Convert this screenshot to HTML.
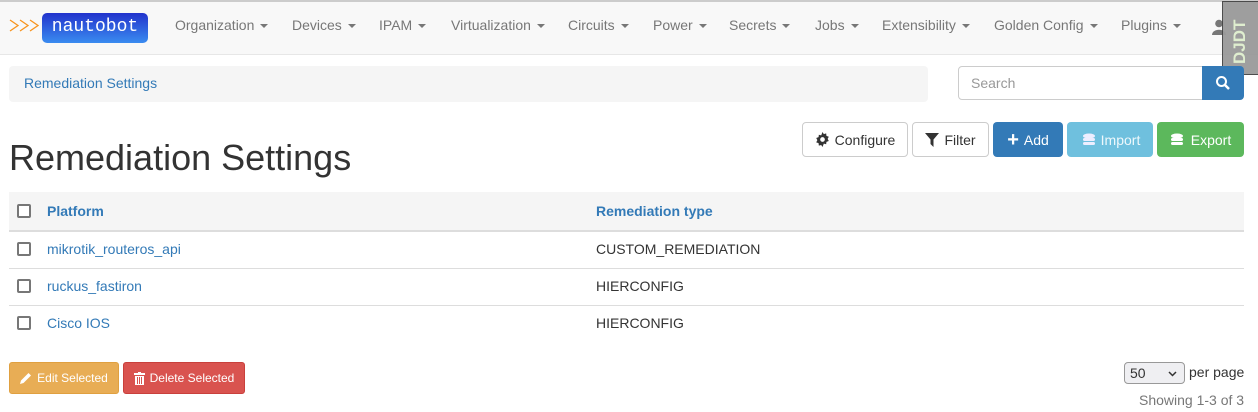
<!DOCTYPE html>
<html><head><meta charset="utf-8"><style>
*{box-sizing:border-box}
body{margin:0;width:1258px;height:412px;overflow:hidden;background:#fff;font-family:"Liberation Sans",sans-serif;font-size:14px;color:#333;position:relative}
.a{position:absolute}
.nav{left:0;top:0;width:1258px;height:55px;background:#f8f8f8;border-top:2px solid #ccc;border-bottom:1px solid #e7e7e7}
.ni{top:17px;font-size:14px;color:#777;white-space:nowrap}
.car{display:inline-block;width:0;height:0;border-left:4px solid transparent;border-right:4px solid transparent;border-top:4px solid #777;vertical-align:middle;margin-left:6px}
.btn{position:absolute;top:122px;height:35px;border-radius:4px;font-size:14px;display:flex;align-items:center;justify-content:center;gap:5px}
.cb{position:absolute;left:17px;width:14px;height:14px;border:2px solid #777;border-radius:2px;background:#fff}
.hr{position:absolute;left:9px;width:1235px;height:1px;background:#ddd}
a{color:#337ab7;text-decoration:none}
</style></head><body>
<div class="a nav"></div>
<svg class="a" style="left:9px;top:19px" width="30" height="13" viewBox="0 0 30 13"><path d="M1 1L9 6.5 1 12M11 1L19 6.5 11 12M21 1L29 6.5 21 12" stroke="#f7931e" stroke-width="1.3" fill="none"/></svg>
<div class="a" style="left:42px;top:13px;width:106px;height:30px;border-radius:5px;background:linear-gradient(#2233cc,#3a8cf0);color:#fff;font-family:'Liberation Mono',monospace;font-size:18px;text-align:center;line-height:29px">nautobot</div>
<div class="a ni" style="left:175px">Organization<span class="car"></span></div>
<div class="a ni" style="left:292px">Devices<span class="car"></span></div>
<div class="a ni" style="left:379px">IPAM<span class="car"></span></div>
<div class="a ni" style="left:451px">Virtualization<span class="car"></span></div>
<div class="a ni" style="left:568px">Circuits<span class="car"></span></div>
<div class="a ni" style="left:653px">Power<span class="car"></span></div>
<div class="a ni" style="left:729px">Secrets<span class="car"></span></div>
<div class="a ni" style="left:815px">Jobs<span class="car"></span></div>
<div class="a ni" style="left:882px">Extensibility<span class="car"></span></div>
<div class="a ni" style="left:994px">Golden Config<span class="car"></span></div>
<div class="a ni" style="left:1121px">Plugins<span class="car"></span></div>
<svg class="a" style="left:1212px;top:19px" width="14" height="16" viewBox="0 0 14 16"><circle cx="7" cy="4.5" r="3.8" fill="#777"/><path d="M0 16 C0 9 14 9 14 16Z" fill="#777"/></svg>
<div class="a" style="left:1222px;top:1px;width:36px;height:74px;background:#9a9a9a;border:1px solid #444;border-right:none;opacity:.95"></div>
<div class="a" style="left:1230px;top:64px;transform:rotate(-90deg);transform-origin:0 0;color:#dfeecf;font-weight:bold;font-size:17px;width:60px;line-height:20px">DJDT</div>

<div class="a" style="left:9px;top:66px;width:919px;height:36px;background:#f5f5f5;border-radius:4px"></div>
<div class="a" style="left:24px;top:75px"><a>Remediation Settings</a></div>
<div class="a" style="left:958px;top:66px;width:246px;height:34px;border:1px solid #ccc;border-radius:4px 0 0 4px;padding:8px 12px;color:#999">Search</div>
<div class="a" style="left:1202px;top:66px;width:42px;height:34px;background:#337ab7;border-radius:0 4px 4px 0"></div>
<svg class="a" style="left:1215px;top:75px" width="16" height="16" viewBox="0 0 16 16"><circle cx="6.5" cy="6.5" r="4.5" stroke="#fff" stroke-width="2" fill="none"/><path d="M10 10 L14 14" stroke="#fff" stroke-width="2.5"/></svg>

<div class="a" style="left:9px;top:137px;font-size:36px;color:#333">Remediation Settings</div>

<div class="btn" style="left:802px;width:106px;border:1px solid #ccc;color:#333"><svg width="15" height="15" viewBox="0 0 16 16"><path d="M8 0l1.4 2.2 2.5-.7.3 2.6 2.5.9-1.2 2.3 1.2 2.3-2.5.9-.3 2.6-2.5-.7L8 16l-1.4-2.2-2.5.7-.3-2.6-2.5-.9L2.5 8.7 1.3 6.4l2.5-.9.3-2.6 2.5.7z" fill="#333"/><circle cx="8" cy="8" r="2.5" fill="#fff"/></svg>Configure</div>
<div class="btn" style="left:912px;width:77px;border:1px solid #ccc;color:#333"><svg width="14" height="14" viewBox="0 0 14 14"><path d="M0 0H14L8.5 6.5V14L5.5 11V6.5Z" fill="#333"/></svg>Filter</div>
<div class="btn" style="left:993px;width:70px;background:#337ab7;color:#fff"><b style="font-size:20px;line-height:1">+</b>Add</div>
<div class="btn" style="left:1067px;width:86px;background:#6fc0de;color:#eef8fc"><svg width="16" height="13" viewBox="0 0 16 13"><ellipse cx="9" cy="3" rx="6" ry="2.5" fill="#eef"/><rect x="3" y="5" width="12" height="3" rx="1.5" fill="#eef"/><rect x="3" y="9" width="12" height="3" rx="1.5" fill="#eef"/></svg>Import</div>
<div class="btn" style="left:1157px;width:87px;background:#5cb85c;color:#fff"><svg width="16" height="13" viewBox="0 0 16 13"><ellipse cx="7" cy="3" rx="6" ry="2.5" fill="#fff"/><rect x="1" y="5" width="12" height="3" rx="1.5" fill="#fff"/><rect x="1" y="9" width="12" height="3" rx="1.5" fill="#fff"/></svg>Export</div>

<div class="a" style="left:9px;top:192px;width:1235px;height:38px;background:#f5f5f5"></div>
<div class="a" style="left:9px;top:230px;width:1235px;height:2px;background:#ddd"></div>
<div class="cb" style="top:204px"></div>
<div class="a" style="left:47px;top:203px;font-weight:bold;color:#337ab7">Platform</div>
<div class="a" style="left:596px;top:203px;font-weight:bold;color:#337ab7">Remediation type</div>

<div class="cb" style="top:242px"></div>
<div class="a" style="left:47px;top:241px"><a>mikrotik_routeros_api</a></div>
<div class="a" style="left:596px;top:241px">CUSTOM_REMEDIATION</div>
<div class="hr" style="top:268px"></div>
<div class="cb" style="top:279px"></div>
<div class="a" style="left:47px;top:278px"><a>ruckus_fastiron</a></div>
<div class="a" style="left:596px;top:278px">HIERCONFIG</div>
<div class="hr" style="top:305px"></div>
<div class="cb" style="top:316px"></div>
<div class="a" style="left:47px;top:315px"><a>Cisco IOS</a></div>
<div class="a" style="left:596px;top:315px">HIERCONFIG</div>

<div class="btn" style="left:9px;top:362px;width:110px;height:32px;background:#e8ad55;border:1px solid #e0a040;color:#fff;font-size:12px;border-radius:3px"><svg width="12" height="12" viewBox="0 0 12 12"><path d="M0 12L1 8.5 8.5 1 11 3.5 3.5 11Z" fill="#fff"/></svg>Edit Selected</div>
<div class="btn" style="left:123px;top:362px;width:122px;height:32px;background:#d9534f;border:1px solid #c9403c;color:#fff;font-size:12px;border-radius:3px"><svg width="11" height="13" viewBox="0 0 11 13"><rect x="0" y="1" width="11" height="2" fill="#fff"/><rect x="4" y="0" width="3" height="1" fill="#fff"/><path d="M1 4H10V13H1Z M3 5V12H4V5Z M5 5V12H6V5Z M7 5V12H8V5Z" fill="#fff" fill-rule="evenodd"/></svg>Delete Selected</div>

<div class="a" style="left:1124px;top:362px;width:61px;height:22px;border:1px solid #999;border-radius:4px;background:#efeff2;padding:2px 5px;font-size:14px">50<svg style="position:absolute;right:7px;top:8px" width="9" height="6" viewBox="0 0 9 6"><path d="M1 1L4.5 4.5 8 1" stroke="#333" stroke-width="1.5" fill="none"/></svg></div>
<div class="a" style="left:1189px;top:364px">per page</div>
<div class="a" style="left:1139px;top:392px;color:#777">Showing 1-3 of 3</div>
</body></html>
